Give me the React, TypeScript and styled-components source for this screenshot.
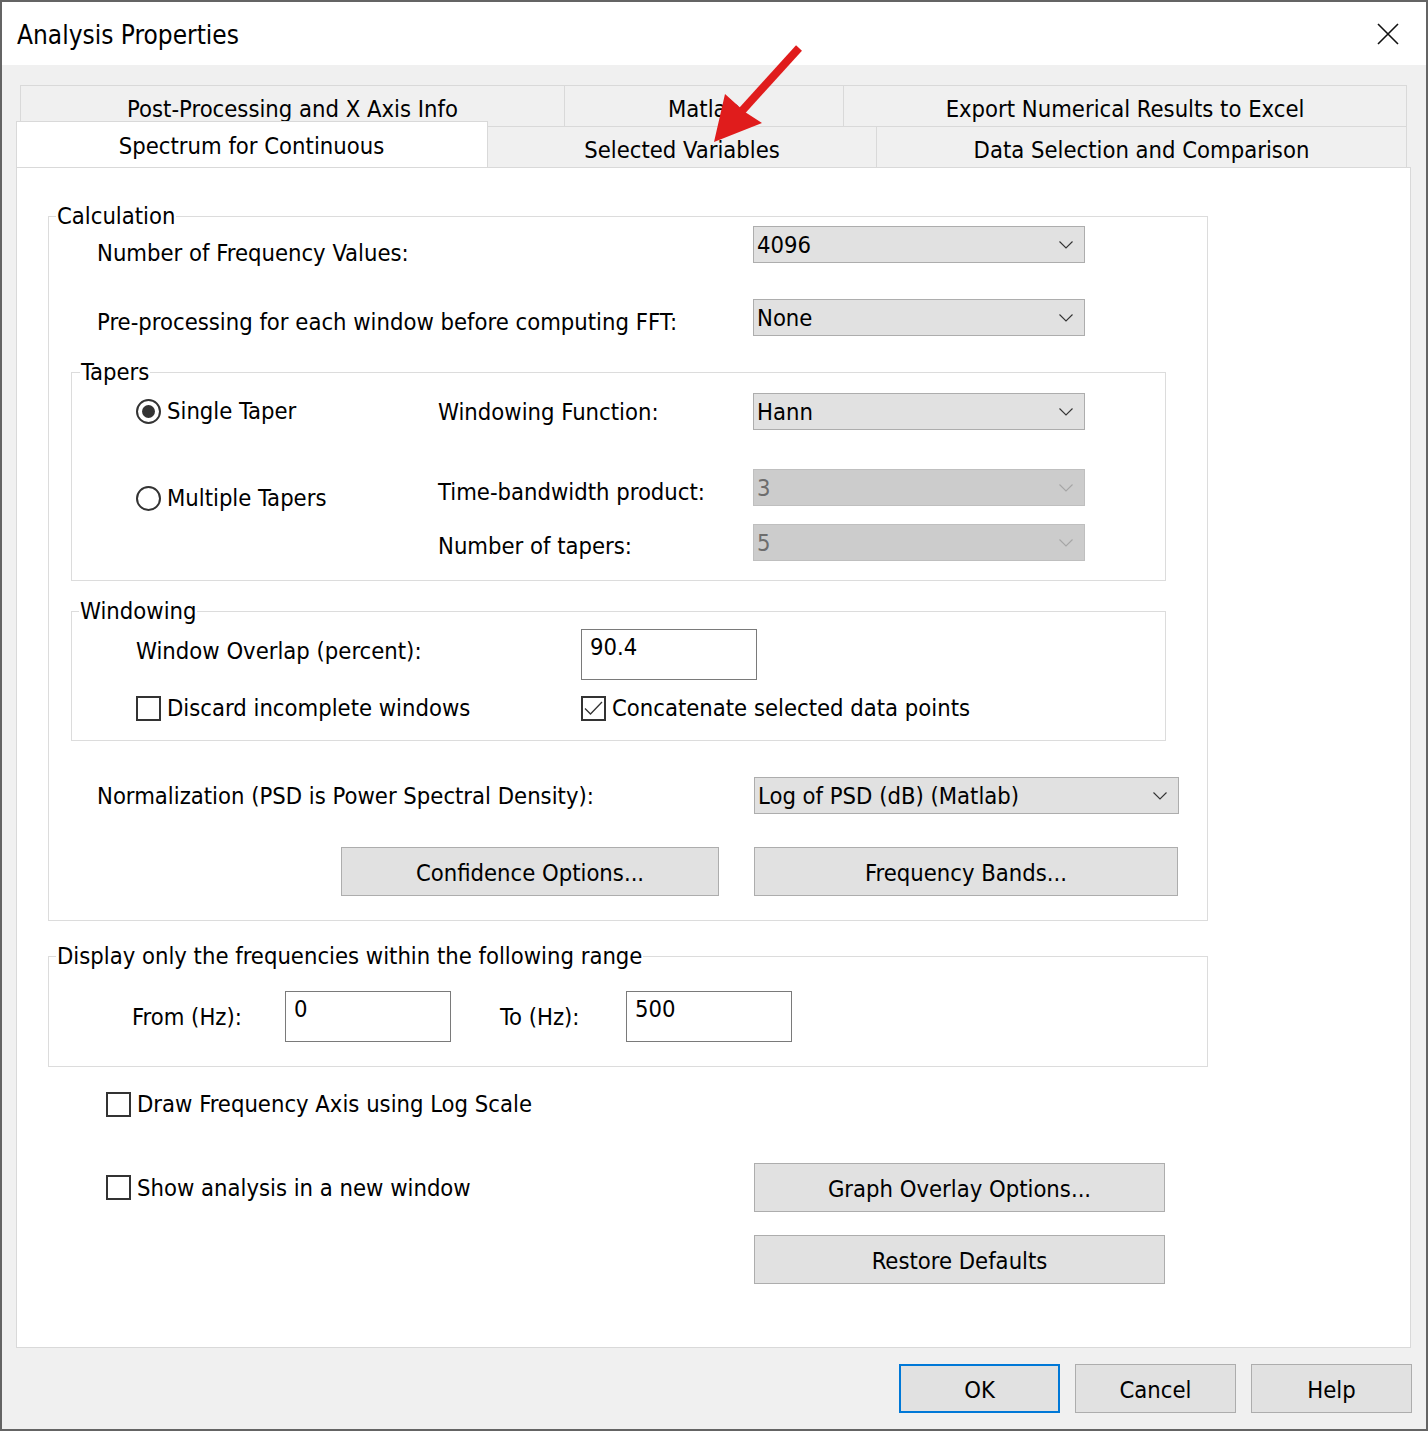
import React from "react";
import styled, { createGlobalStyle } from "styled-components";

const GlobalStyle = createGlobalStyle`
  html, body { margin: 0; padding: 0; background: #ffffff; }
  body {
    font-family: "DejaVu Sans Condensed", "DejaVu Sans", sans-serif;
    font-stretch: condensed;
    font-size: 23.6px;
    color: #000000;
  }
  * { box-sizing: border-box; }
`;

const Window = styled.div`
  position: relative;
  width: 1428px;
  height: 1431px;
  border: 2px solid #646464;
  background: #f0f0f0;
  display: flex;
  flex-direction: column;
  overflow: hidden;
`;

const TitleBar = styled.div`
  height: 63px;
  flex: none;
  background: #ffffff;
  display: flex;
  align-items: center;
  justify-content: space-between;
  padding-left: 15px;
`;

const TitleText = styled.span`
  font-size: 26px;
  line-height: 30px;
  padding-top: 2px;
`;

const CloseBox = styled.div`
  width: 76px;
  height: 63px;
  display: flex;
  align-items: center;
  justify-content: center;
`;

const Body = styled.div`
  flex: 1;
  display: flex;
  flex-direction: column;
  padding: 20px 0 0 14px;
`;

const TabRowTop = styled.div`
  display: flex;
  margin-left: 4px;
  height: 41px;
`;

const TabRowBottom = styled.div`
  display: flex;
  align-items: flex-end;
  height: 41px;
`;

const Tab = styled.div<{ $w: number; $first?: boolean; $shift?: number }>`
  width: ${(p) => p.$w}px;
  height: 41px;
  background: #f0f0f0;
  border-top: 1px solid #d9d9d9;
  border-right: 1px solid #d9d9d9;
  border-left: ${(p) => (p.$first ? "1px solid #d9d9d9" : "none")};
  display: flex;
  align-items: center;
  justify-content: center;
  line-height: 28px;
  padding-top: ${(p) => p.$shift ?? 4}px;
  white-space: nowrap;
`;

const ActiveTab = styled.div`
  position: relative;
  z-index: 1;
  width: 472px;
  height: 46px;
  margin-top: -5px;
  background: #ffffff;
  border: 1px solid #d9d9d9;
  border-bottom: none;
  display: flex;
  justify-content: center;
  padding-top: 10px;
  line-height: 28px;
  padding-right: 1px;
`;

const Panel = styled.div`
  width: 1395px;
  height: 1181px;
  flex: none;
  background: #ffffff;
  border: 1px solid #d9d9d9;
  padding: 38px 0 0 31px;
  display: flex;
  flex-direction: column;
  align-items: flex-start;
`;

const Group = styled.fieldset<{ $w: number; $top?: number; $left?: number }>`
  margin: ${(p) => p.$top ?? 0}px 0 0 ${(p) => p.$left ?? 0}px;
  padding: 0;
  border: 1px solid #dcdcdc;
  width: ${(p) => p.$w}px;
  min-width: 0;
`;

const Legend = styled.legend<{ $ml: number }>`
  padding: 0 1px;
  margin-left: ${(p) => p.$ml}px;
  line-height: 20px;
`;

const CalcContent = styled.div`
  display: flex;
  flex-direction: column;
  align-items: flex-start;
  padding-bottom: 24px;
`;

const Row = styled.div<{ $top: number; $indent: number }>`
  display: flex;
  align-items: flex-start;
  height: 37px;
  margin-top: ${(p) => p.$top}px;
  padding-left: ${(p) => p.$indent}px;
`;

const Label = styled.span<{ $w?: number; $off: number; $pl?: number }>`
  display: block;
  flex: none;
  width: ${(p) => (p.$w ? `${p.$w}px` : "auto")};
  padding-top: ${(p) => p.$off}px;
  padding-left: ${(p) => p.$pl ?? 0}px;
  line-height: 28px;
  white-space: nowrap;
`;

const SelectBox = styled.div<{ $w: number; $disabled?: boolean }>`
  width: ${(p) => p.$w}px;
  height: 37px;
  flex: none;
  background: ${(p) => (p.$disabled ? "#cccccc" : "#e1e1e1")};
  border: 1px solid ${(p) => (p.$disabled ? "#bfbfbf" : "#adadad")};
  color: ${(p) => (p.$disabled ? "#6d6d6d" : "#000000")};
  display: flex;
  align-items: flex-start;
  justify-content: space-between;
  padding: 4px 11px 0 3px;
  line-height: 28px;
`;

const Chevron = styled.svg`
  margin-top: 10px;
  flex: none;
`;

const TaperGrid = styled.div`
  display: grid;
  grid-template-columns: 302px 315px 332px;
  grid-template-rows: 37px 39px 37px 18px 37px;
  padding: 11px 0 19px 64px;
`;

const Cell = styled.div<{ $row: number; $col: number; $off?: number }>`
  grid-row: ${(p) => p.$row};
  grid-column: ${(p) => p.$col};
  align-self: start;
  margin-top: ${(p) => p.$off ?? 0}px;
  line-height: 28px;
  white-space: nowrap;
`;

const Choice = styled.label`
  display: flex;
  align-items: center;
  gap: 6px;
  line-height: 28px;
  white-space: nowrap;
`;

const RadioMark = styled.span<{ $on?: boolean }>`
  width: 25px;
  height: 25px;
  flex: none;
  border: 2px solid #333333;
  border-radius: 50%;
  display: flex;
  align-items: center;
  justify-content: center;
  background: #ffffff;
  &::after {
    content: "";
    width: 13px;
    height: 13px;
    border-radius: 50%;
    background: ${(p) => (p.$on ? "#333333" : "transparent")};
  }
`;

const CheckMark = styled.span`
  width: 25px;
  height: 25px;
  flex: none;
  border: 2px solid #333333;
  background: #ffffff;
  display: flex;
  align-items: center;
  justify-content: center;
`;

const WindowingGrid = styled.div`
  display: grid;
  grid-template-columns: 445px auto;
  grid-template-rows: 51px 14px 28px;
  padding: 8px 0 18px 64px;
`;

const TextInput = styled.div<{ $w: number }>`
  width: ${(p) => p.$w}px;
  height: 51px;
  flex: none;
  border: 1px solid #7a7a7a;
  background: #ffffff;
  padding: 3px 0 0 8px;
  line-height: 28px;
`;

const PushButton = styled.div<{ $w: number; $default?: boolean }>`
  width: ${(p) => p.$w}px;
  height: 49px;
  flex: none;
  background: #e1e1e1;
  border: ${(p) => (p.$default ? "2px solid #0078d7" : "1px solid #adadad")};
  display: flex;
  align-items: center;
  justify-content: center;
  line-height: 28px;
  padding-top: 2px;
  white-space: nowrap;
`;

const ButtonRow = styled.div`
  display: flex;
  gap: 35px;
  margin-top: 33px;
  padding-left: 292px;
`;

const RangeRow = styled.div`
  display: flex;
  align-items: flex-start;
  padding: 25px 0 24px 83px;
`;

const BottomGrid = styled.div`
  display: grid;
  grid-template-columns: 706px 411px;
  grid-template-rows: 28px 45px 49px 23px 49px;
  margin-top: 23px;
`;

const GridItem = styled.div<{ $row: number; $col: number; $left?: number; $center?: boolean }>`
  grid-row: ${(p) => p.$row};
  grid-column: ${(p) => p.$col};
  padding-left: ${(p) => p.$left ?? 0}px;
  align-self: ${(p) => (p.$center ? "center" : "start")};
`;

const ButtonBar = styled.div`
  display: flex;
  justify-content: flex-end;
  gap: 15px;
  margin-top: 16px;
  padding-right: 14px;
`;

const ArrowLayer = styled.svg`
  position: absolute;
  left: 0;
  top: 0;
  pointer-events: none;
  z-index: 5;
`;

const ChevronIcon: React.FC<{ disabled?: boolean }> = ({ disabled }) => (
  <Chevron width="14" height="8" viewBox="0 0 14 8">
    <polyline
      points="0.5,0.5 7,7 13.5,0.5"
      fill="none"
      stroke={disabled ? "#a6a6a6" : "#333333"}
      strokeWidth="1.1"
    />
  </Chevron>
);

const Select: React.FC<{ w: number; value: string; disabled?: boolean }> = ({ w, value, disabled }) => (
  <SelectBox $w={w} $disabled={disabled}>
    <span>{value}</span>
    <ChevronIcon disabled={disabled} />
  </SelectBox>
);

const Radio: React.FC<{ on?: boolean; text: string }> = ({ on, text }) => (
  <Choice>
    <RadioMark $on={on} />
    <span>{text}</span>
  </Choice>
);

const Check: React.FC<{ on?: boolean; text: string }> = ({ on, text }) => (
  <Choice>
    <CheckMark>
      {on && (
        <svg width="19" height="15" viewBox="0 0 19 15">
          <polyline points="1,7.5 6.5,13 18,1" fill="none" stroke="#333333" strokeWidth="1.3" />
        </svg>
      )}
    </CheckMark>
    <span>{text}</span>
  </Choice>
);

export default function App() {
  return (
    <>
      <GlobalStyle />
      <Window>
        <TitleBar>
          <TitleText>Analysis Properties</TitleText>
          <CloseBox>
            <svg width="22" height="22" viewBox="0 0 22 22">
              <path d="M1 1 L21 21 M21 1 L1 21" stroke="#111111" strokeWidth="1.6" fill="none" />
            </svg>
          </CloseBox>
        </TitleBar>
        <Body>
          <TabRowTop>
            <Tab $w={545} $first $shift={5}>Post-Processing and X Axis Info</Tab>
            <Tab $w={279} $shift={5}>Matlab</Tab>
            <Tab $w={563} $shift={5}>Export Numerical Results to Excel</Tab>
          </TabRowTop>
          <TabRowBottom>
            <ActiveTab>Spectrum for Continuous</ActiveTab>
            <Tab $w={389} $shift={5}>Selected Variables</Tab>
            <Tab $w={530} $shift={5}>Data Selection and Comparison</Tab>
          </TabRowBottom>
          <Panel>
            <Group $w={1160}>
              <Legend $ml={7}>Calculation</Legend>
              <CalcContent>
                <Row $top={0} $indent={48}>
                  <Label $w={656} $off={13}>Number of Frequency Values:</Label>
                  <Select w={332} value="4096" />
                </Row>
                <Row $top={36} $indent={48}>
                  <Label $w={656} $off={9}>Pre-processing for each window before computing FFT:</Label>
                  <Select w={332} value="None" />
                </Row>
                <Group $w={1095} $top={26} $left={22}>
                  <Legend $ml={8}>Tapers</Legend>
                  <TaperGrid>
                    <Cell $row={1} $col={1} $off={4}>
                      <Radio on text="Single Taper" />
                    </Cell>
                    <Cell $row={1} $col={2} $off={5}>Windowing Function:</Cell>
                    <Cell $row={1} $col={3}>
                      <Select w={332} value="Hann" />
                    </Cell>
                    <Cell $row={3} $col={1} $off={15}>
                      <Radio text="Multiple Tapers" />
                    </Cell>
                    <Cell $row={3} $col={2} $off={9}>Time-bandwidth product:</Cell>
                    <Cell $row={3} $col={3}>
                      <Select w={332} value="3" disabled />
                    </Cell>
                    <Cell $row={5} $col={2} $off={8}>Number of tapers:</Cell>
                    <Cell $row={5} $col={3}>
                      <Select w={332} value="5" disabled />
                    </Cell>
                  </TaperGrid>
                </Group>
                <Group $w={1095} $top={20} $left={22}>
                  <Legend $ml={7}>Windowing</Legend>
                  <WindowingGrid>
                    <Cell $row={1} $col={1} $off={8}>Window Overlap (percent):</Cell>
                    <Cell $row={1} $col={2}>
                      <TextInput $w={176}>90.4</TextInput>
                    </Cell>
                    <Cell $row={3} $col={1}>
                      <Check text="Discard incomplete windows" />
                    </Cell>
                    <Cell $row={3} $col={2}>
                      <Check on text="Concatenate selected data points" />
                    </Cell>
                  </WindowingGrid>
                </Group>
                <Row $top={36} $indent={48}>
                  <Label $w={657} $off={5}>Normalization (PSD is Power Spectral Density):</Label>
                  <Select w={425} value="Log of PSD (dB) (Matlab)" />
                </Row>
                <ButtonRow>
                  <PushButton $w={378}>Confidence Options...</PushButton>
                  <PushButton $w={424}>Frequency Bands...</PushButton>
                </ButtonRow>
              </CalcContent>
            </Group>
            <Group $w={1160} $top={25}>
              <Legend $ml={7}>Display only the frequencies within the following range</Legend>
              <RangeRow>
                <Label $w={153} $off={12}>From (Hz):</Label>
                <TextInput $w={166}>0</TextInput>
                <Label $w={175} $off={12} $pl={49}>To (Hz):</Label>
                <TextInput $w={166}>500</TextInput>
              </RangeRow>
            </Group>
            <BottomGrid>
              <GridItem $row={1} $col={1} $left={58}>
                <Check text="Draw Frequency Axis using Log Scale" />
              </GridItem>
              <GridItem $row={3} $col={1} $left={58} $center>
                <Check text="Show analysis in a new window" />
              </GridItem>
              <GridItem $row={3} $col={2}>
                <PushButton $w={411}>Graph Overlay Options...</PushButton>
              </GridItem>
              <GridItem $row={5} $col={2}>
                <PushButton $w={411}>Restore Defaults</PushButton>
              </GridItem>
            </BottomGrid>
          </Panel>
          <ButtonBar>
            <PushButton $w={161} $default>OK</PushButton>
            <PushButton $w={161}>Cancel</PushButton>
            <PushButton $w={161}>Help</PushButton>
          </ButtonBar>
        </Body>
        <ArrowLayer width="1428" height="1431" viewBox="0 0 1428 1431">
          <line x1="797" y1="46" x2="738" y2="111" stroke="#e01c1c" strokeWidth="8" />
          <polygon points="712,140 723,92 743,110 760,121" fill="#e01c1c" />
        </ArrowLayer>
      </Window>
    </>
  );
}
